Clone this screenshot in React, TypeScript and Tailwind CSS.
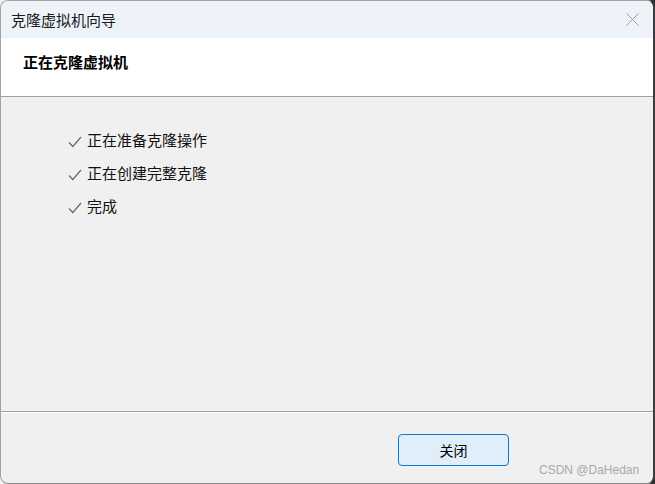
import React from 'react';

const font = { fontFamily: '"Noto Sans CJK SC", "Noto Sans", sans-serif' };

const steps = ['正在准备克隆操作', '正在创建完整克隆', '完成'];

const Check: React.FC = () => (
  <svg width="14" height="12" viewBox="0 0 14 12" fill="none">
    <path d="M1 6.5 L4.8 10.5 L13 1" stroke="#5b6b7b" strokeWidth="1.2" />
  </svg>
);

const App: React.FC = () => {
  return (
    <div className="w-[655px] h-[484px] bg-[linear-gradient(to_right,#f3f3f3_90%,#2e2e2e_90%)]" style={font}>
      <div className="w-full h-full flex flex-col rounded-[8px] overflow-hidden border border-[#a3a3a3] border-r-2 border-r-[#3c3c3c] border-b-[#8a8a8a] bg-[#f0f0f0]">
        {/* title bar */}
        <div className="h-[37px] shrink-0 bg-[#eef2f9] flex items-center justify-between pl-[10px] pr-[14px]">
          <span className="text-[15px] leading-none text-[#1a1a1a]">克隆虚拟机向导</span>
          <svg width="13" height="13" viewBox="0 0 13 13" fill="none">
            <path d="M0.5 0.5 L12.5 12.5 M12.5 0.5 L0.5 12.5" stroke="#a0a0a0" strokeWidth="1" />
          </svg>
        </div>

        {/* header */}
        <div className="h-[58px] shrink-0 bg-white pl-[22px] pt-[11px]">
          <span className="text-[15px] font-bold leading-none text-black">正在克隆虚拟机</span>
        </div>
        <div className="h-px bg-[#a0a0a0] shrink-0" />

        {/* body */}
        <div className="flex-1 flex flex-col gap-[14px] pl-[67px] pt-[33px]">
          {steps.map((s) => (
            <div key={s} className="flex items-center gap-[5px] h-[19px]">
              <div className="pt-[4px]">
                <Check />
              </div>
              <span className="text-[15px] leading-none text-[#111]">{s}</span>
            </div>
          ))}
        </div>

        <div className="h-px bg-[#a0a0a0] shrink-0" />
        <div className="h-px bg-white shrink-0" />

        {/* footer */}
        <div className="h-[70px] shrink-0 relative">
          <button className="absolute left-[397px] top-[21px] w-[111px] h-[32px] rounded-[4px] border border-[#0a78d4] bg-[#e0eef9] text-[14px] text-black">
            关闭
          </button>
          <span
            className="absolute left-[538px] top-[48px] text-[12px] text-[#a8a8a8]"
            style={{ fontFamily: '"Liberation Sans", Arial, sans-serif' }}
          >
            CSDN @DaHedan
          </span>
        </div>
      </div>
    </div>
  );
};

export default App;
